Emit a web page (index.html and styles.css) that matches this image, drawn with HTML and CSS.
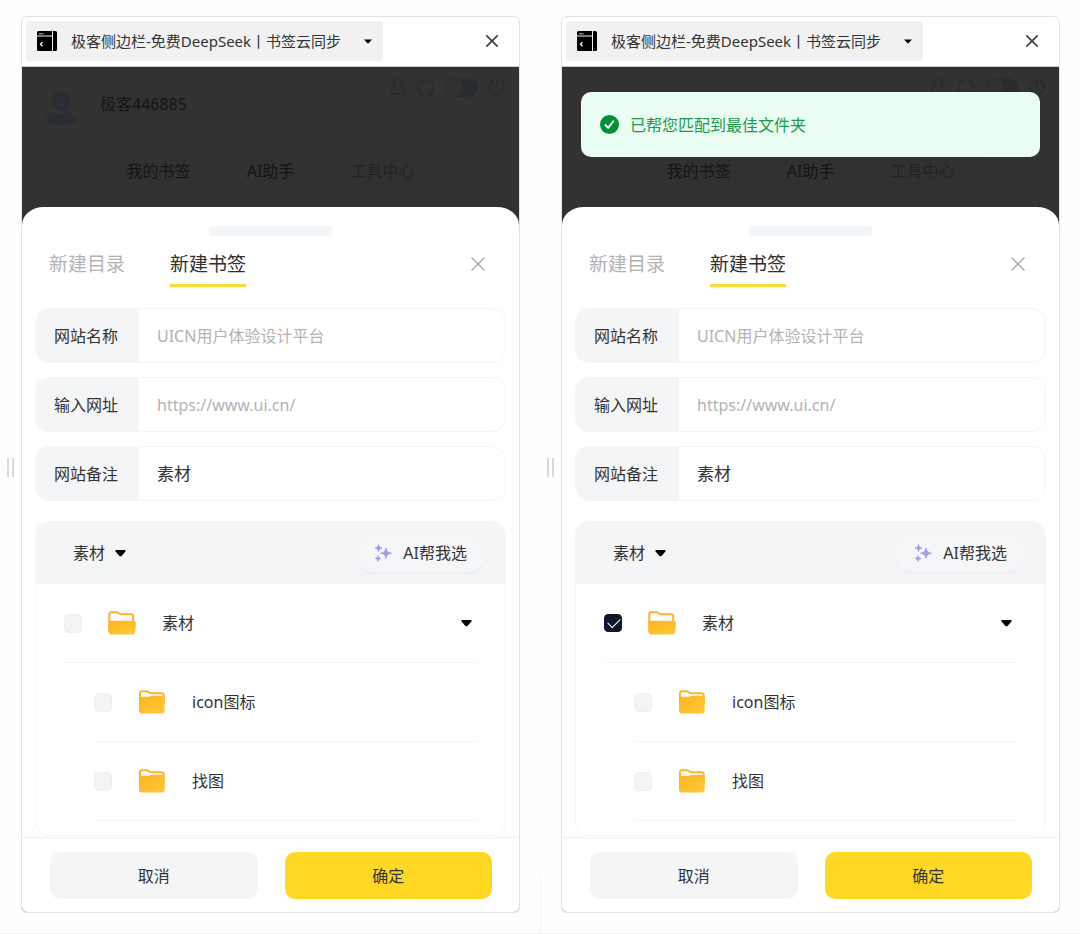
FILE: index.html
```html
<!DOCTYPE html>
<html lang="zh-CN">
<head>
<meta charset="utf-8">
<meta name="viewport" content="width=device-width, initial-scale=1">
<title>极客侧边栏</title>
<link rel="stylesheet" href="styles.css">
</head>
<body>
<svg class="sprite" aria-hidden="true">
  <defs>
    <linearGradient id="folder-fill" x1="0" y1="0" x2="1" y2="1">
      <stop offset="0" stop-color="#fcb423"/>
      <stop offset="1" stop-color="#ffc935"/>
    </linearGradient>
  </defs>
  <symbol id="logo" viewBox="0 0 20 20">
    <path fill="#000" d="M1.500 0H15v4.500H0V1.500A1.500 1.500 0 0 1 1.500 0zM16 0h2.500A1.500 1.500 0 0 1 20 1.500v17a1.500 1.500 0 0 1-1.500 1.500H16zM0 5.500h15V20H1.500A1.500 1.500 0 0 1 0 18.500z"/>
    <path fill="none" stroke="#ccc" stroke-width="1" d="M2 2.800h4.500"/>
    <path fill="none" stroke="#fff" stroke-width="1.300" d="M5.500 11.200 3.500 13.200l2 2"/>
  </symbol>
  <symbol id="caret" viewBox="0 0 11 8">
    <path d="M1.300 1h8.400c1 0 1.300.9.700 1.500L6.800 6.700c-.7.800-1.900.8-2.600 0L.6 2.500C0 1.900.3 1 1.300 1z"/>
  </symbol>
  <symbol id="caret-small" viewBox="0 0 8 5"><path d="M0 .5h8L4 4.800z"/></symbol>
  <symbol id="cross" viewBox="0 0 16 16">
    <path fill="none" stroke="currentColor" d="m1.500 1.500 13 13m0-13-13 13"/>
  </symbol>
  <symbol id="avatar" viewBox="0 0 32 36">
    <circle cx="16" cy="11" r="10"/>
    <path d="M1 30c0-5 6-8 9-8 3 2 9 2 12 0 3 0 9 3 9 8 0 3-7 5-15 5S1 33 1 30z"/>
    <path d="M13 14q3 3 6 0" fill="none" stroke="#363a3f" stroke-width="1.500"/>
  </symbol>
  <symbol id="user" viewBox="0 0 18 20">
    <path fill="none" stroke="currentColor" stroke-width="1.500" d="M9 1.500a4.600 4.600 0 0 1 2.700 8.400c3 .9 4.800 3.200 4.800 6.600 0 1-.5 1.500-1.500 1.500H3c-1 0-1.500-.5-1.500-1.500 0-3.400 1.800-5.700 4.800-6.600A4.600 4.600 0 0 1 9 1.500z"/>
  </symbol>
  <symbol id="refresh" viewBox="0 0 18 18">
    <path fill="none" stroke="currentColor" stroke-width="1.500" d="M6 16A7.500 7.500 0 0 1 6 2h2M12 2a7.500 7.500 0 0 1 0 14h-2M12 13v3.500h3M6 5V1.500"/>
  </symbol>
  <symbol id="power" viewBox="0 0 18 18">
    <path fill="none" stroke="currentColor" stroke-width="1.500" d="M5.500 2.500a7.300 7.300 0 1 0 7 0M9 1v8"/>
  </symbol>
  <symbol id="sparkles" viewBox="0 0 18 18">
    <path fill="#a09cf2" stroke="#a09cf2" stroke-width=".8" stroke-linejoin="round" d="M12 4c.9 3.600 1.800 4.400 5.500 5.200-3.700.8-4.600 1.600-5.500 5.200-.9-3.600-1.800-4.400-5.500-5.200C10.200 8.400 11.100 7.600 12 4zM4.500.6c.6 2.300 1.200 2.900 3.500 3.500-2.300.6-2.900 1.200-3.500 3.500C3.900 5.300 3.300 4.700 1 4.100 3.300 3.500 3.900 2.900 4.500.6zM4 11.500c.5 1.900 1 2.400 3 2.900-2 .5-2.500 1-3 2.900-.5-1.900-1-2.400-3-2.900 2-.5 2.500-1 3-2.900z"/>
  </symbol>
  <symbol id="folder-open" viewBox="0 0 28 24">
    <path fill="#fff" stroke="#fbb42b" stroke-width="2" stroke-linejoin="round" d="M1.300 20V3.200c0-1.200.7-2 2-2h5.200c1 0 1.500.3 2.100.9.800.8 1.300 1.100 2.400 1.100h10c1.400 0 2.200.9 2.200 2.200V14"/>
    <path fill="url(#folder-fill)" d="M.4 12.300c0-1.600.9-2.600 2.600-2.600h22.200c2 0 3 1.100 2.800 3.100l-.8 7.600c-.2 2-1.400 3.100-3.400 3.100H3.600c-2 0-3.200-1.200-3.200-3z"/>
  </symbol>
  <symbol id="folder" viewBox="0 0 28 24">
    <path fill="#fff" stroke="#fbb42b" stroke-width="2" stroke-linejoin="round" d="M2 19V3.200c0-1.200.7-2 2-2h4.600c1 0 1.500.3 2.100.9.800.8 1.400 1.100 2.500 1.100H23.500c1.400 0 2.200.9 2.200 2.200V14"/>
    <path fill="url(#folder-fill)" d="M1 8.800c0-1.300.8-2 2-2h7c2 0 2.500-1.100 4.300-1.100h9.500c1.900 0 2.900 1 2.900 2.900v12c0 1.900-1 2.900-2.900 2.900H3.900c-1.900 0-2.900-1-2.900-2.900z"/>
  </symbol>
  <symbol id="success" viewBox="0 0 20 20">
    <circle cx="10" cy="10" r="10" fill="#058f36"/>
    <path fill="none" stroke="#fff" stroke-width="2" stroke-linecap="round" stroke-linejoin="round" d="m5.800 10.600 2.800 3 5.400-7"/>
  </symbol>
</svg>

<main class="board">
  <div class="column">
    <div class="drag-handle"></div>
    <section class="panel">
      <header class="panel-header">
        <button class="panel-switch" type="button">
          <svg class="logo"><use href="#logo"/></svg>
          <span>极客侧边栏-免费DeepSeek丨书签云同步</span>
          <svg class="caret-small"><use href="#caret-small"/></svg>
        </button>
        <button class="icon-button panel-close" type="button" aria-label="关闭侧边栏"><svg><use href="#cross"/></svg></button>
      </header>
      <div class="panel-body">
        <div class="backdrop">
          <div class="account">
            <svg class="avatar"><use href="#avatar"/></svg>
            <span class="account-name">极客446885</span>
            <div class="tools">
              <button class="tool" type="button" aria-label="账户"><svg><use href="#user"/></svg></button>
              <button class="tool" type="button" aria-label="刷新"><svg><use href="#refresh"/></svg></button>
              <input class="toggle" type="checkbox" role="switch" aria-label="夜间模式">
              <button class="tool" type="button" aria-label="退出"><svg><use href="#power"/></svg></button>
            </div>
          </div>
          <nav class="sections">
            <a href="#">我的书签</a>
            <a href="#">AI助手</a>
            <a class="muted" href="#">工具中心</a>
          </nav>
        </div>
        <form class="sheet">
          <div class="sheet-content">
            <div class="grip"></div>
            <div class="sheet-head">
              <div class="sheet-tabs">
                <button class="sheet-tab" type="button">新建目录</button>
                <button class="sheet-tab active" type="button">新建书签</button>
              </div>
              <button class="icon-button sheet-close" type="button" aria-label="关闭"><svg><use href="#cross"/></svg></button>
            </div>
            <div class="fields">
              <div class="field"><label for="name-a">网站名称</label><input id="name-a" type="text" placeholder="UICN用户体验设计平台"></div>
              <div class="field"><label for="url-a">输入网址</label><input id="url-a" type="text" placeholder="https://www.ui.cn/"></div>
              <div class="field"><label for="note-a">网站备注</label><input id="note-a" type="text" value="素材"></div>
            </div>
            <div class="tree">
              <div class="tree-head">
                <div class="picker">
                  <select aria-label="文件夹"><option>素材</option></select>
                  <svg class="caret"><use href="#caret"/></svg>
                </div>
                <button class="ai-button" type="button"><svg><use href="#sparkles"/></svg>AI帮我选</button>
              </div>
              <ul class="tree-list">
                <li class="tree-row">
                  <label><input class="check" type="checkbox"><svg class="folder"><use href="#folder-open"/></svg>素材</label>
                  <button class="icon-button expand" type="button" aria-label="展开"><svg class="caret"><use href="#caret"/></svg></button>
                </li>
                <li class="tree-row child"><label><input class="check" type="checkbox"><svg class="folder"><use href="#folder"/></svg>icon图标</label></li>
                <li class="tree-row child"><label><input class="check" type="checkbox"><svg class="folder"><use href="#folder"/></svg>找图</label></li>
              </ul>
            </div>
          </div>
          <footer class="actions">
            <button class="action" type="button">取消</button>
            <button class="action primary" type="submit">确定</button>
          </footer>
        </form>
      </div>
    </section>
  </div>

  <div class="column">
    <div class="drag-handle"></div>
    <section class="panel">
      <header class="panel-header">
        <button class="panel-switch" type="button">
          <svg class="logo"><use href="#logo"/></svg>
          <span>极客侧边栏-免费DeepSeek丨书签云同步</span>
          <svg class="caret-small"><use href="#caret-small"/></svg>
        </button>
        <button class="icon-button panel-close" type="button" aria-label="关闭侧边栏"><svg><use href="#cross"/></svg></button>
      </header>
      <div class="panel-body">
        <div class="toast" role="status"><svg><use href="#success"/></svg>已帮您匹配到最佳文件夹</div>
        <div class="backdrop">
          <div class="account">
            <svg class="avatar"><use href="#avatar"/></svg>
            <span class="account-name">极客446885</span>
            <div class="tools">
              <button class="tool" type="button" aria-label="账户"><svg><use href="#user"/></svg></button>
              <button class="tool" type="button" aria-label="刷新"><svg><use href="#refresh"/></svg></button>
              <input class="toggle" type="checkbox" role="switch" aria-label="夜间模式">
              <button class="tool" type="button" aria-label="退出"><svg><use href="#power"/></svg></button>
            </div>
          </div>
          <nav class="sections">
            <a href="#">我的书签</a>
            <a href="#">AI助手</a>
            <a class="muted" href="#">工具中心</a>
          </nav>
        </div>
        <form class="sheet">
          <div class="sheet-content">
            <div class="grip"></div>
            <div class="sheet-head">
              <div class="sheet-tabs">
                <button class="sheet-tab" type="button">新建目录</button>
                <button class="sheet-tab active" type="button">新建书签</button>
              </div>
              <button class="icon-button sheet-close" type="button" aria-label="关闭"><svg><use href="#cross"/></svg></button>
            </div>
            <div class="fields">
              <div class="field"><label for="name-b">网站名称</label><input id="name-b" type="text" placeholder="UICN用户体验设计平台"></div>
              <div class="field"><label for="url-b">输入网址</label><input id="url-b" type="text" placeholder="https://www.ui.cn/"></div>
              <div class="field"><label for="note-b">网站备注</label><input id="note-b" type="text" value="素材"></div>
            </div>
            <div class="tree">
              <div class="tree-head">
                <div class="picker">
                  <select aria-label="文件夹"><option>素材</option></select>
                  <svg class="caret"><use href="#caret"/></svg>
                </div>
                <button class="ai-button" type="button"><svg><use href="#sparkles"/></svg>AI帮我选</button>
              </div>
              <ul class="tree-list">
                <li class="tree-row">
                  <label><input class="check" type="checkbox" checked><svg class="folder"><use href="#folder-open"/></svg>素材</label>
                  <button class="icon-button expand" type="button" aria-label="展开"><svg class="caret"><use href="#caret"/></svg></button>
                </li>
                <li class="tree-row child"><label><input class="check" type="checkbox"><svg class="folder"><use href="#folder"/></svg>icon图标</label></li>
                <li class="tree-row child"><label><input class="check" type="checkbox"><svg class="folder"><use href="#folder"/></svg>找图</label></li>
              </ul>
            </div>
          </div>
          <footer class="actions">
            <button class="action" type="button">取消</button>
            <button class="action primary" type="submit">确定</button>
          </footer>
        </form>
      </div>
    </section>
  </div>
</main>
</body>
</html>
```
FILE: styles.css
```css
* {
  box-sizing: border-box;
}

body {
  margin: 0;
  background: #fefefe;
  color: #333;
  font: 16px/24px "Noto Sans", "Noto Sans CJK SC", sans-serif;
}

button,
input,
select {
  margin: 0;
  padding: 0;
  border: 0;
  background: none;
  color: inherit;
  font: inherit;
}

button {
  cursor: pointer;
}

svg {
  display: block;
  flex: none;
}

.sprite {
  position: absolute;
  width: 0;
  height: 0;
}

.board {
  display: grid;
  grid-template-columns: 1fr 1fr;
  border-bottom: 1px solid #f0f0f0;
}

.column {
  display: flex;
  align-items: center;
  padding: 16px 20px 20px 7px;
}

.column + .column {
  background: linear-gradient(#f3f3f3, #f3f3f3) left bottom / 1px 58px no-repeat;
}

.drag-handle {
  width: 7px;
  height: 19px;
  margin: 5px 7px 0 0;
  border: solid #d9d9d9;
  border-width: 0 2px;
}

.panel {
  flex: 1;
  min-width: 0;
  overflow: hidden;
  border: 1px solid #e2e2e2;
  border-radius: 6px;
  background: #fff;
}

/* Header */

.panel-header {
  display: flex;
  align-items: center;
  justify-content: space-between;
  padding: 4px 20px 5px 4px;
  border-bottom: 1px solid #c9cccc;
}

.panel-switch {
  display: flex;
  align-items: center;
  height: 40px;
  padding: 0 11px;
  border-radius: 4px;
  background: #f1f1f1;
  font-size: 15px;
  white-space: nowrap;
}

.logo {
  width: 20px;
  height: 20px;
  margin-right: 14px;
}

.caret-small {
  width: 8px;
  height: 5px;
  margin-left: 23px;
}

.icon-button {
  display: flex;
  align-items: center;
}

.panel-close {
  color: #444;
}

.panel-close svg {
  width: 14px;
  height: 14px;
  stroke-width: 2;
}

/* Dimmed page behind the sheet */

.panel-body {
  position: relative;
  background: #323232;
}

.backdrop {
  display: flex;
  flex-direction: column;
  align-items: center;
  gap: 26px;
  padding: 8px 13px 17px 23px;
  color: #141414;
}

.account {
  display: flex;
  align-items: flex-start;
  align-self: stretch;
}

.avatar {
  width: 32px;
  height: 36px;
  margin-top: 15px;
  fill: #292d33;
}

.account-name {
  margin: 17px auto 0 23px;
}

.tools {
  display: flex;
  align-items: center;
  gap: 10px;
  height: 24px;
  color: #292b2b;
}

.tool svg {
  width: 18px;
  height: 18px;
}

.toggle {
  width: 33px;
  height: 19px;
  border-radius: 10px;
  appearance: none;
  background: radial-gradient(circle at 10px 50%, #313131 8px, #292b2c 9px, #282c30 10px);
}

.sections {
  display: grid;
  grid-template-columns: repeat(3, 112px);
  margin-right: 10px;
  border-radius: 8px;
  background: #313131;
  line-height: 38px;
  text-align: center;
}

.sections a {
  color: inherit;
  text-decoration: none;
}

.sections .muted {
  color: #232323;
}

.toast {
  position: absolute;
  top: 25px;
  right: 19px;
  left: 19px;
  display: flex;
  align-items: center;
  gap: 11px;
  height: 65px;
  padding: 0 19px;
  border-radius: 10px;
  background: #eafdf2;
  color: #1c9a4c;
}

.toast svg {
  width: 19px;
  height: 19px;
}

/* Sheet */

.sheet {
  overflow: hidden;
  border-radius: 22px 22px 0 0 / 18px 18px 0 0;
  background: #fff;
}

.sheet-content {
  padding: 19px 13px 3px;
}

.grip {
  width: 123px;
  height: 10px;
  margin: 0 auto 13px;
  border-radius: 3px;
  background: #f3f6f8;
}

.sheet-head {
  display: flex;
  align-items: flex-start;
  justify-content: space-between;
  margin: 0 20px 21px 14px;
}

.sheet-tabs {
  display: flex;
  gap: 45px;
}

.sheet-tab {
  padding-bottom: 5px;
  border-bottom: 3px solid transparent;
  color: #b3b3b3;
  font-size: 19px;
  line-height: 30px;
}

.sheet-tab.active {
  border-color: #fbda3a;
  color: #2e2e2e;
}

.sheet-close {
  height: 30px;
  color: #a3a3a3;
}

.sheet-close svg {
  width: 16px;
  height: 16px;
  stroke-width: 1.3;
}

.fields {
  display: grid;
  gap: 14px;
}

.field {
  display: flex;
  height: 55px;
  overflow: hidden;
  border: 1px solid #f3f5f7;
  border-radius: 14px;
}

.field label {
  flex: none;
  width: 103px;
  padding-left: 18px;
  background: #f3f5f7;
  line-height: 54px;
}

.field input {
  flex: 1;
  min-width: 0;
  padding: 0 18px;
  outline: 0;
  font-size: 17px;
}

.field input::placeholder {
  color: #b3b3b3;
  font-size: 16px;
}

.tree {
  margin-top: 20px;
  overflow: hidden;
  border: 1px solid #f3f5f7;
  border-radius: 14px;
}

.tree-head {
  display: flex;
  align-items: center;
  justify-content: space-between;
  height: 62px;
  padding: 0 18px 0 37px;
  background: #f3f5f7;
}

.picker {
  position: relative;
}

.picker select {
  padding-right: 20px;
  appearance: none;
  outline: 0;
}

.caret {
  width: 11px;
  height: 8px;
  fill: #000;
}

.picker .caret {
  position: absolute;
  top: 8px;
  right: 0;
  pointer-events: none;
}

.ai-button {
  display: flex;
  align-items: center;
  gap: 11px;
  height: 38px;
  padding: 0 20px;
  border-radius: 19px;
  box-shadow: 0 2px 3px -1px #e8eaed;
  background: #f4f6f8;
}

.ai-button svg {
  width: 18px;
  height: 18px;
}

.tree-list {
  margin: 0;
  padding: 0 28px 14px;
  list-style: none;
}

.tree-row {
  display: flex;
  align-items: center;
  justify-content: space-between;
  height: 79px;
  border-bottom: 1px solid #f3f6f7;
}

.tree-row.child {
  margin-left: 30px;
}

.tree-row label {
  display: flex;
  align-items: center;
}

.check {
  width: 18px;
  height: 19px;
  border: 1px solid #eeefef;
  border-radius: 5px;
  appearance: none;
  background: #f3f4f4;
}

.check:checked {
  height: 18px;
  border-color: #111529;
  border-radius: 4px;
  background: #111529;
}

.check:checked::before {
  display: block;
  width: 11px;
  height: 6px;
  margin: 3px;
  border: solid #fff;
  border-width: 0 0 1px 1px;
  content: "";
  transform: rotate(-45deg);
}

.folder {
  width: 28px;
  height: 24px;
  margin: 0 26px;
}

.expand {
  margin-right: 5px;
}

.actions {
  display: grid;
  grid-template-columns: 1fr 1fr;
  gap: 27px;
  padding: 13px 27px 13px 28px;
  box-shadow: 0 -2px 4px #f0f1f8;
}

.action {
  height: 47px;
  border-radius: 10px;
  background: #f3f5f7;
}

.action.primary {
  background: #ffd824;
}
```
